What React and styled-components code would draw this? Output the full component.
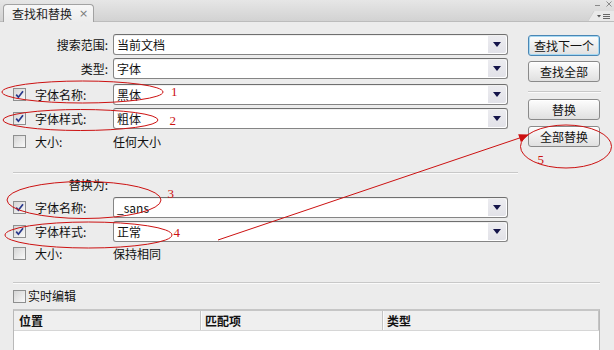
import React from "react";
import styled, { createGlobalStyle } from "styled-components";

const Global = createGlobalStyle`
  html, body { margin: 0; padding: 0; background: #ececec; }
  body {
    font-family: "Noto Sans CJK SC", "Noto Sans", sans-serif;
    font-size: 12px;
    color: #111;
  }
`;

const Window = styled.div`
  position: relative;
  width: 614px;
  height: 350px;
  overflow: hidden;
  background: #ececec;
`;

const TitleBar = styled.div`
  height: 22px;
  box-sizing: border-box;
  display: flex;
  align-items: flex-end;
  padding-left: 3px;
  background: linear-gradient(#e6e6e6, #d2d2d2);
  border-bottom: 1px solid #bcbcbc;
`;

const Tab = styled.div`
  height: 18px;
  box-sizing: border-box;
  margin-bottom: -1px;
  display: flex;
  align-items: center;
  gap: 7px;
  padding: 0 5px 0 8px;
  border: 1px solid #a2a2a2;
  border-bottom: none;
  border-radius: 4px 4px 0 0;
  background: linear-gradient(#f7f7f7, #ececec);
  line-height: 16px;
  color: #222;
`;

const TabClose = styled.span`
  font-family: "DejaVu Sans", sans-serif;
  font-size: 11px;
  color: #7a7a7a;
`;

const WinControls = styled.div`
  margin-left: auto;
  align-self: stretch;
  display: flex;
  flex-direction: column;
  justify-content: space-between;
  align-items: flex-end;
`;

const Body = styled.div`
  padding: 12px 0 0 13px;
`;

const Main = styled.div`
  display: flex;
  align-items: flex-start;
`;

const LeftCol = styled.div`
  width: 505px;
  display: flex;
  flex-direction: column;
`;

const RightCol = styled.div`
  margin-left: 10px;
  width: 73px;
  padding-top: 1px;
  display: flex;
  flex-direction: column;
`;

const FieldRow = styled.div`
  display: grid;
  grid-template-columns: 100px 395px;
  height: ${(p) => p.$h || 21}px;
  margin-top: ${(p) => p.$gap || 0}px;
`;

const Label = styled.div`
  display: flex;
  align-items: center;
  justify-content: ${(p) => (p.$right ? "flex-end" : "flex-start")};
  padding-right: ${(p) => (p.$right ? 5 : 0)}px;
  line-height: 16px;
  white-space: nowrap;
`;

const PlainValue = styled.div`
  display: flex;
  align-items: center;
  line-height: 16px;
`;

const SelectBox = styled.div`
  height: 21px;
  box-sizing: border-box;
  display: flex;
  align-items: stretch;
  border: 1px solid #858585;
  border-top-color: #6f6f6f;
  border-radius: 3px;
  background: #fff;
  box-shadow: inset 0 1px 0 #f0f0f0;
`;

const SelectValue = styled.div`
  flex: 1;
  display: flex;
  align-items: center;
  padding-left: 3px;
  line-height: 16px;
`;

const SelectArrow = styled.div`
  width: 18px;
  margin: 1px;
  display: flex;
  align-items: center;
  justify-content: center;
  background: linear-gradient(#ececf0, #e2e2e8);
  border-radius: 0 2px 2px 0;
`;

const BoxCheck = styled.span`
  width: 13px;
  height: 13px;
  box-sizing: border-box;
  margin-right: 9px;
  display: inline-flex;
  align-items: center;
  justify-content: center;
  border: 1px solid #8e8f8f;
  background: linear-gradient(135deg, #d5d5d5, #f9f9f9);
  flex: none;
`;

const Separator = styled.div`
  width: ${(p) => p.$w}px;
  height: 0;
  margin-top: ${(p) => p.$gap || 0}px;
  border-top: 1px solid #c8c8c8;
  border-bottom: 1px solid #fafafa;
`;

const Button = styled.button`
  width: 72px;
  height: 21px;
  margin-top: ${(p) => p.$gap || 0}px;
  padding: 0;
  box-sizing: border-box;
  font-family: inherit;
  font-size: 12px;
  line-height: 16px;
  color: #111;
  border: 1px solid ${(p) => (p.$focus ? "#4a86b4" : "#8a8a8a")};
  border-radius: 3px;
  background: linear-gradient(#fdfdfd, #e0e0e0);
  box-shadow: ${(p) => (p.$focus ? "inset 0 0 0 1px #a6d8f2" : "inset 0 1px 0 #fff")};
`;

const LiveRow = styled.div`
  height: 16px;
  margin-top: 4px;
  display: flex;
  align-items: center;
  line-height: 16px;
`;

const LiveCheck = styled(BoxCheck)`
  margin-right: 2px;
`;

const Table = styled.div`
  width: 587px;
  height: 50px;
  margin-top: 5px;
  box-sizing: border-box;
  border: 1px solid #b9b9b9;
  border-top: 2px solid #c6c6c6;
  background: #fff;
`;

const TableHead = styled.div`
  display: grid;
  grid-template-columns: 186px 182px 1fr;
  height: 19px;
  background: #efefef;
  border-bottom: 1px solid #d6d6d6;
`;

const HeadCell = styled.div`
  display: flex;
  align-items: center;
  padding-left: ${(p) => (p.$first ? 5 : 4)}px;
  font-weight: 700;
  line-height: 16px;
  border-left: ${(p) => (p.$first ? "none" : "1px solid #c4c4c4")};
  box-shadow: ${(p) => (p.$first ? "none" : "inset 1px 0 0 #fbfbfb")};
  border-right: ${(p) => (p.$last ? "1px solid #c4c4c4" : "none")};
`;

const Overlay = styled.svg`
  position: absolute;
  left: 0;
  top: 0;
  pointer-events: none;
`;

const Check = () => (
  <svg width="11" height="11" viewBox="0 0 11 11">
    <path d="M2.2 5.6 L4.4 8.2 L9 2.2" fill="none" stroke="#27378a" strokeWidth="1.7" />
  </svg>
);

const Arrow = () => (
  <svg width="8" height="5" viewBox="0 0 8 5">
    <path d="M0 0 H8 L4 5 Z" fill="#14144a" />
  </svg>
);

const Select = ({ value }) => (
  <SelectBox>
    <SelectValue>{value}</SelectValue>
    <SelectArrow>
      <Arrow />
    </SelectArrow>
  </SelectBox>
);

const CheckLabel = ({ checked, children }) => (
  <Label>
    <BoxCheck>{checked && <Check />}</BoxCheck>
    {children}
  </Label>
);

const TopIcons = () => (
  <svg width="22" height="9" viewBox="0 0 22 9">
    <path d="M3 5.5 H8" stroke="#8a8a8a" strokeWidth="1" />
    <path d="M14.5 1.5 L19.5 6.5 M19.5 1.5 L14.5 6.5" stroke="#8a8a8a" strokeWidth="1" />
  </svg>
);

const MenuIcon = () => (
  <svg width="26" height="10" viewBox="0 0 26 10">
    <path d="M0 10 L6 0 H26 V10 Z" fill="#e9e9e9" />
    <path d="M0 10 L6 0" stroke="#cfcfcf" strokeWidth="1" />
    <path d="M9 4 H13 L11 6.5 Z" fill="#555" />
    <path d="M15 3.5 H22 M15 5.5 H22 M15 7.5 H22" stroke="#666" strokeWidth="1" />
  </svg>
);

const Annotations = () => {
  const red = "#cc1111";
  return (
    <Overlay width="614" height="350" viewBox="0 0 614 350">
      <g fill="none" stroke={red} strokeWidth="1">
        <ellipse cx="82.5" cy="92" rx="80.5" ry="11" />
        <ellipse cx="80.5" cy="120" rx="77.5" ry="10.5" />
        <ellipse cx="84" cy="200" rx="77" ry="18.5" />
        <ellipse cx="88.5" cy="235" rx="83.5" ry="13" />
        <ellipse cx="566" cy="146.5" rx="45.5" ry="21.5" />
        <path d="M218 240 L521 137.5" />
      </g>
      <path d="M529 134.5 L520.8 142 L518.2 134.2 Z" fill={red} />
      <g fill={red} fontFamily='"Liberation Serif", serif' fontSize="13">
        <text x="171" y="96">1</text>
        <text x="169.5" y="125">2</text>
        <text x="167.5" y="198">3</text>
        <text x="173.5" y="237">4</text>
        <text x="537.5" y="164">5</text>
      </g>
    </Overlay>
  );
};

export default function App() {
  return (
    <>
      <Global />
      <Window>
        <TitleBar>
          <Tab>
            查找和替换
            <TabClose>×</TabClose>
          </Tab>
          <WinControls>
            <TopIcons />
            <MenuIcon />
          </WinControls>
        </TitleBar>
        <Body>
          <Main>
            <LeftCol>
              <FieldRow>
                <Label $right>搜索范围:</Label>
                <Select value="当前文档" />
              </FieldRow>
              <FieldRow $gap={3}>
                <Label $right>类型:</Label>
                <Select value="字体" />
              </FieldRow>
              <FieldRow $gap={5}>
                <CheckLabel checked>字体名称:</CheckLabel>
                <Select value="黑体" />
              </FieldRow>
              <FieldRow $gap={3}>
                <CheckLabel checked>字体样式:</CheckLabel>
                <Select value="粗体" />
              </FieldRow>
              <FieldRow $gap={2}>
                <CheckLabel>大小:</CheckLabel>
                <PlainValue>任何大小</PlainValue>
              </FieldRow>
              <Separator $w={505} $gap={20} />
              <FieldRow $h={22}>
                <Label $right>替换为:</Label>
                <PlainValue />
              </FieldRow>
              <FieldRow $gap={1}>
                <CheckLabel checked>字体名称:</CheckLabel>
                <Select value="_sans" />
              </FieldRow>
              <FieldRow $gap={3}>
                <CheckLabel checked>字体样式:</CheckLabel>
                <Select value="正常" />
              </FieldRow>
              <FieldRow $gap={1}>
                <CheckLabel>大小:</CheckLabel>
                <PlainValue>保持相同</PlainValue>
              </FieldRow>
            </LeftCol>
            <RightCol>
              <Button $focus>查找下一个</Button>
              <Button $gap={5}>查找全部</Button>
              <Separator $w={73} $gap={9} />
              <Button $gap={6}>替换</Button>
              <Button $gap={6}>全部替换</Button>
            </RightCol>
          </Main>
          <Separator $w={587} $gap={18} />
          <LiveRow>
            <LiveCheck />
            实时编辑
          </LiveRow>
          <Table>
            <TableHead>
              <HeadCell $first>位置</HeadCell>
              <HeadCell>匹配项</HeadCell>
              <HeadCell $last>类型</HeadCell>
            </TableHead>
          </Table>
        </Body>
        <Annotations />
      </Window>
    </>
  );
}
